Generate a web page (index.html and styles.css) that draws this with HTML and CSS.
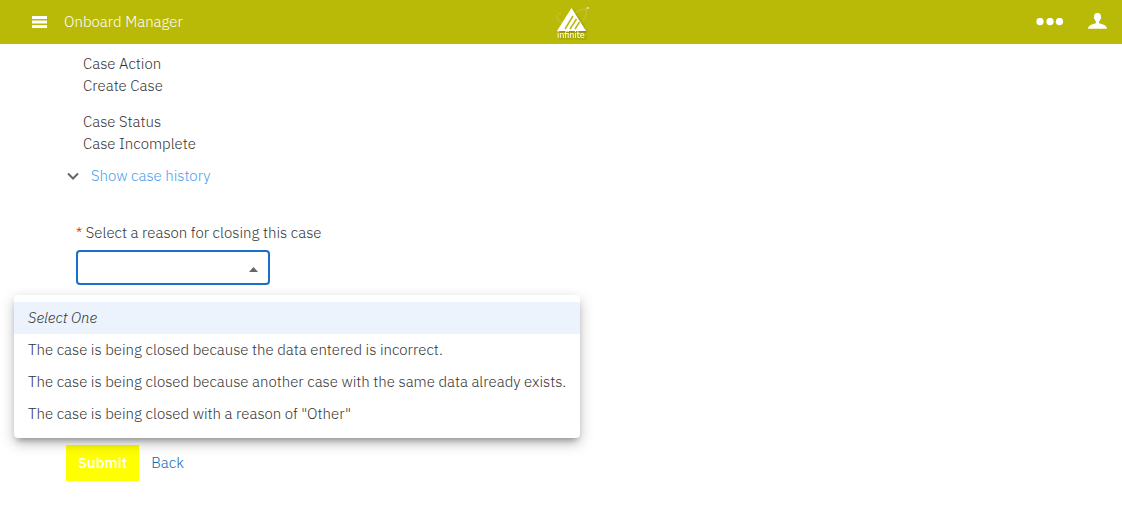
FILE: index.html
```html
<!DOCTYPE html>
<html lang="en">
<head>
<meta charset="utf-8">
<meta name="viewport" content="width=device-width, initial-scale=1">
<title>Onboard Manager</title>
<link rel="stylesheet" href="styles.css">
</head>
<body>
<header class="topbar">
  <div class="topbar-start">
    <button class="icon-button" type="button" aria-label="Menu">
      <svg width="15" height="12" viewBox="0 0 15 12" fill="currentColor" aria-hidden="true"><path d="M0 0h15v3H0zM0 4.600h15v2.800H0zM0 9h15v3H0z"/></svg>
    </button>
    <span class="app-title">Onboard Manager</span>
  </div>
  <svg class="logo" width="38" height="36" viewBox="0 0 38 36" role="img" aria-label="infinite">
    <defs><filter id="soft" x="-20%" y="-20%" width="150%" height="150%"><feDropShadow dx="2" dy="2" stdDeviation="1" flood-color="#5c5c00" flood-opacity=".45"/></filter></defs>
    <g fill="none" stroke="#d9d9a0" stroke-width="1" opacity=".4">
      <path d="M6 9C1 10 0 14 6 19s17 12 23 12c4 0 4-4 1-8"/>
      <path d="M6 24C10 15 23 4 32 5M31 6c2 5-5 16-14 20"/>
    </g>
    <g filter="url(#soft)">
      <path d="M16.500 4 31 27H2z" fill="#fff"/>
      <path d="M10 25 18 12M15 25 21.500 15M20 25 24.500 18" stroke="#b9b908" stroke-width="1.500" fill="none"/>
      <text class="logo-text" x="2" y="34">infinite</text>
    </g>
    <path d="M31.500 4h2.500" stroke="#fff"/>
  </svg>
  <div class="topbar-end">
    <button class="icon-button" type="button" aria-label="More">
      <svg width="28" height="8" viewBox="0 0 28 8" fill="currentColor" aria-hidden="true"><circle cx="4" cy="3.500" r="3.700"/><circle cx="14" cy="3.500" r="3.700"/><circle cx="23.500" cy="3.500" r="3.700"/></svg>
    </button>
    <button class="icon-button" type="button" aria-label="Account">
      <svg width="19" height="18" viewBox="0 0 19 18" fill="currentColor" aria-hidden="true"><path d="M9.500 0C12 0 13.200 1.500 13 4c.6 1-.1 2-.7 2.300-.2 1.200-.7 2-1.300 2.500v1.300c2 1.100 7.700 1.600 8 5.600H0c.3-4 6-4.500 8-5.600V8.800c-.6-.5-1.100-1.300-1.300-2.500C6.100 6 5.400 5 6 4 5.800 1.500 7 0 9.500 0z"/></svg>
    </button>
  </div>
</header>
<main class="content">
  <dl class="facts">
    <div class="fact"><dt>Case Action</dt><dd>Create Case</dd></div>
    <div class="fact"><dt>Case Status</dt><dd>Case Incomplete</dd></div>
  </dl>
  <button class="history" type="button" aria-expanded="false">
    <svg width="12" height="8" viewBox="0 0 12 8" fill="none" stroke="#666" stroke-width="2" aria-hidden="true"><path d="m1 1.500 5 5 5-5"/></svg>
    <span>Show case history</span>
  </button>
  <form class="close-form">
    <div class="field">
      <label class="field-label" for="reason"><span class="required">*</span> Select a reason for closing this case</label>
      <div class="picker">
        <select class="select" id="reason" required><option value=""></option></select>
        <svg class="caret" width="9" height="5" viewBox="0 0 9 5" aria-hidden="true"><path d="M0 5 4.500 0 9 5z" fill="#666"/></svg>
        <ul class="menu" role="listbox" aria-label="Reason">
          <li class="option option-active" role="option" aria-selected="true">Select One</li>
          <li class="option" role="option">The case is being closed because the data entered is incorrect.</li>
          <li class="option" role="option">The case is being closed because another case with the same data already exists.</li>
          <li class="option" role="option">The case is being closed with a reason of "Other"</li>
        </ul>
      </div>
    </div>
    <div class="actions">
      <button class="submit" type="submit">Submit</button>
      <a class="back" href="#">Back</a>
    </div>
  </form>
</main>
</body>
</html>
```
FILE: styles.css
```css
* {
  box-sizing: border-box;
}

body {
  margin: 0;
  background: #fff;
  color: #333;
  font: 300 15px/22px "IBM Plex Sans", Roboto, sans-serif;
}

button {
  border: 0;
  padding: 0;
  background: none;
  font: inherit;
  color: inherit;
}

.topbar {
  display: grid;
  grid-template-columns: 1fr auto 1fr;
  align-items: center;
  height: 44px;
  padding: 0 15px 0 32px;
  background: #b9b908;
  color: #fff;
}

.topbar-start,
.topbar-end {
  display: flex;
  align-items: center;
}

.topbar-start {
  gap: 17px;
}

.topbar-end {
  justify-content: flex-end;
  gap: 24px;
}

.icon-button {
  display: flex;
}

.logo {
  margin-left: 8px;
}

.logo-text {
  fill: #fff;
  font: 400 8px "DejaVu Sans", sans-serif;
}

.content {
  padding: 9px 66px 44px;
}

.facts {
  display: grid;
  gap: 14px;
  margin: 0 0 10px;
  padding-left: 17px;
}

.fact dd {
  margin: 0;
}

.history {
  display: flex;
  align-items: center;
  gap: 12px;
  padding-left: 1px;
  color: #4a9df0;
}

.field {
  padding: 35px 10px 0;
}

.field-label {
  display: block;
  margin-bottom: 6px;
}

.required {
  color: #e02020;
}

.picker {
  position: relative;
  width: 194px;
}

.select {
  display: block;
  width: 100%;
  height: 35px;
  border: 2px solid #1a6fc9;
  border-radius: 4px;
  background: #fff;
  font: inherit;
  appearance: none;
  outline: 0;
}

.caret {
  position: absolute;
  right: 12px;
  top: 17px;
}

.menu {
  position: absolute;
  top: 45px;
  left: -62px;
  margin: 0;
  padding: 7px 0 8px;
  border-radius: 4px;
  background: #fff;
  box-shadow: 0 5px 6px -3px rgba(0, 0, 0, .3), 0 5px 14px rgba(0, 0, 0, .25);
  list-style: none;
  white-space: nowrap;
}

.option {
  padding: 5px 14px;
}

.option-active {
  background: #ecf3fc;
  font-style: italic;
}

.actions {
  display: flex;
  align-items: center;
  gap: 12px;
  margin-top: 160px;
}

.submit {
  padding: 7px 12px;
  background: #ff0;
  color: #fff;
  font-weight: 500;
}

.back {
  color: #0f6cb6;
  text-decoration: none;
}
```
